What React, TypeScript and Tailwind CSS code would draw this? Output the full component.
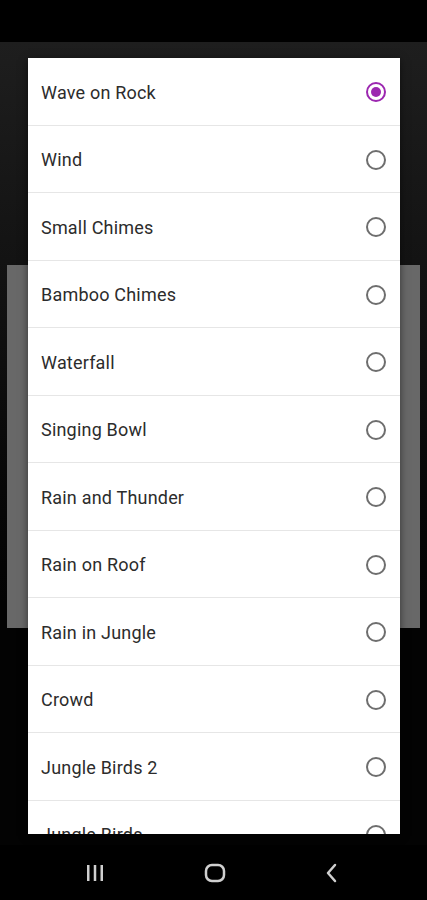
import React, { useState } from 'react';

const sounds = [
    'Wave on Rock',
    'Wind',
    'Small Chimes',
    'Bamboo Chimes',
    'Waterfall',
    'Singing Bowl',
    'Rain and Thunder',
    'Rain on Roof',
    'Rain in Jungle',
    'Crowd',
    'Jungle Birds 2',
    'Jungle Birds',
    'Forest',
];

function Radio({ checked }: { checked: boolean }) {
    if (checked) {
        return (
            <span className="w-[20px] h-[20px] rounded-full border-2 border-[#9c27b0] flex items-center justify-center">
                <span className="w-[10px] h-[10px] rounded-full bg-[#9c27b0]" />
            </span>
        );
    }
    return <span className="w-[20px] h-[20px] rounded-full border-2 border-[#6e6e6e]" />;
}

export default function App() {
    const [selected, setSelected] = useState(0);

    return (
        <div className="h-[900px] w-[427px] bg-black flex flex-col overflow-hidden" style={{ fontFamily: 'Roboto, "Liberation Sans", sans-serif' }}>
            {/* status bar */}
            <div className="h-[42px] bg-black shrink-0" />

            {/* app behind the dialog */}
            <div className="relative h-[803px] shrink-0 bg-gradient-to-b from-[#1e1e1e] via-[#0e0e0e] via-40% to-[#030303] to-70%">
                <div className="mt-[223px] mx-[7px] h-[363px] bg-[#686868]" />

                {/* dialog */}
                <div className="absolute top-[16px] left-[28px] w-[372px] h-[776px] bg-white overflow-hidden shadow-[0_2px_8px_rgba(0,0,0,0.5)]">
                    {sounds.map((name, i) => (
                        <button
                            key={name}
                            onClick={() => setSelected(i)}
                            className="w-full h-[67.5px] flex items-center justify-between pl-[13px] pr-[14px] pt-[2px] border-b border-[#e6e6e6] text-left"
                        >
                            <span className="text-[18px] tracking-[0.2px] text-[#2c2c2c]">{name}</span>
                            <Radio checked={selected === i} />
                        </button>
                    ))}
                </div>
            </div>

            {/* navigation bar */}
            <div className="flex-1 bg-black flex items-center pl-[85px] gap-[99px]">
                <svg width="20" height="18" viewBox="0 0 20 18" className="text-[#d0d0d0]">
                    <rect x="2" y="1" width="2.5" height="16" fill="currentColor" />
                    <rect x="8.75" y="1" width="2.5" height="16" fill="currentColor" />
                    <rect x="15.5" y="1" width="2.5" height="16" fill="currentColor" />
                </svg>
                <svg width="22" height="20" viewBox="0 0 22 20" className="text-[#d0d0d0]">
                    <rect x="2" y="2" width="18" height="16" rx="6" fill="none" stroke="currentColor" strokeWidth="2.5" />
                </svg>
                <svg width="14" height="20" viewBox="0 0 14 20" className="text-[#d0d0d0]">
                    <path d="M10 2 L3 10 L10 18" fill="none" stroke="currentColor" strokeWidth="2.5" strokeLinecap="round" strokeLinejoin="round" />
                </svg>
            </div>
        </div>
    );
}
